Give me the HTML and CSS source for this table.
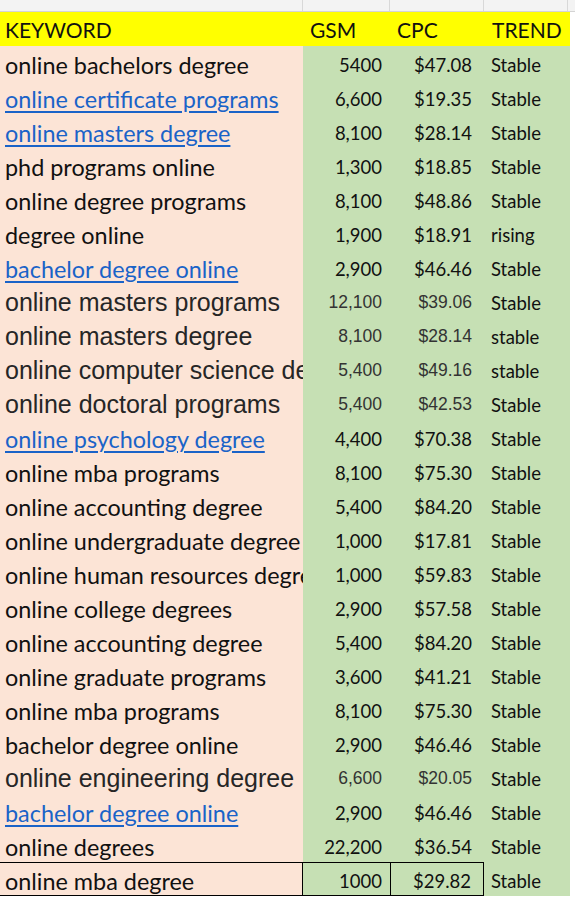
FILE: index.html
```html
<!DOCTYPE html>
<html>
<head>
<meta charset="utf-8">
<link rel="stylesheet" href="styles.css">
</head>
<body>
<div class="topstrip">
  <div class="tcell c1"></div><div class="tcell c2"></div><div class="tcell c3"></div><div class="tcell c4"></div><div class="tcell c5"></div>
</div>
<div class="sheet">
  <div class="row head">
    <div class="cell kw">KEYWORD</div><div class="cell h">GSM</div><div class="cell h">CPC</div><div class="cell h hr">TREND</div>
  </div>
  <div class="row"><div class="cell kw">online bachelors degree</div><div class="cell num">5400</div><div class="cell cpc">$47.08</div><div class="cell tr">Stable</div></div>
  <div class="row"><div class="cell kw"><span class="link">online certificate programs</span></div><div class="cell num">6,600</div><div class="cell cpc">$19.35</div><div class="cell tr">Stable</div></div>
  <div class="row"><div class="cell kw"><span class="link">online masters degree</span></div><div class="cell num">8,100</div><div class="cell cpc">$28.14</div><div class="cell tr">Stable</div></div>
  <div class="row"><div class="cell kw">phd programs online</div><div class="cell num">1,300</div><div class="cell cpc">$18.85</div><div class="cell tr">Stable</div></div>
  <div class="row"><div class="cell kw">online degree programs</div><div class="cell num">8,100</div><div class="cell cpc">$48.86</div><div class="cell tr">Stable</div></div>
  <div class="row"><div class="cell kw">degree online</div><div class="cell num">1,900</div><div class="cell cpc">$18.91</div><div class="cell tr">rising</div></div>
  <div class="row"><div class="cell kw"><span class="link">bachelor degree online</span></div><div class="cell num">2,900</div><div class="cell cpc">$46.46</div><div class="cell tr">Stable</div></div>
  <div class="row"><div class="cell kw arial">online masters programs</div><div class="cell num arialn">12,100</div><div class="cell cpc arialn">$39.06</div><div class="cell tr">Stable</div></div>
  <div class="row"><div class="cell kw arial">online masters degree</div><div class="cell num arialn">8,100</div><div class="cell cpc arialn">$28.14</div><div class="cell tr">stable</div></div>
  <div class="row"><div class="cell kw arial">online computer science degree</div><div class="cell num arialn">5,400</div><div class="cell cpc arialn">$49.16</div><div class="cell tr">stable</div></div>
  <div class="row"><div class="cell kw arial">online doctoral programs</div><div class="cell num arialn">5,400</div><div class="cell cpc arialn">$42.53</div><div class="cell tr">Stable</div></div>
  <div class="row"><div class="cell kw"><span class="link">online psychology degree</span></div><div class="cell num">4,400</div><div class="cell cpc">$70.38</div><div class="cell tr">Stable</div></div>
  <div class="row"><div class="cell kw">online mba programs</div><div class="cell num">8,100</div><div class="cell cpc">$75.30</div><div class="cell tr">Stable</div></div>
  <div class="row"><div class="cell kw">online accounting degree</div><div class="cell num">5,400</div><div class="cell cpc">$84.20</div><div class="cell tr">Stable</div></div>
  <div class="row"><div class="cell kw">online undergraduate degree</div><div class="cell num">1,000</div><div class="cell cpc">$17.81</div><div class="cell tr">Stable</div></div>
  <div class="row"><div class="cell kw">online human resources degree</div><div class="cell num">1,000</div><div class="cell cpc">$59.83</div><div class="cell tr">Stable</div></div>
  <div class="row"><div class="cell kw">online college degrees</div><div class="cell num">2,900</div><div class="cell cpc">$57.58</div><div class="cell tr">Stable</div></div>
  <div class="row"><div class="cell kw">online accounting degree</div><div class="cell num">5,400</div><div class="cell cpc">$84.20</div><div class="cell tr">Stable</div></div>
  <div class="row"><div class="cell kw">online graduate programs</div><div class="cell num">3,600</div><div class="cell cpc">$41.21</div><div class="cell tr">Stable</div></div>
  <div class="row"><div class="cell kw">online mba programs</div><div class="cell num">8,100</div><div class="cell cpc">$75.30</div><div class="cell tr">Stable</div></div>
  <div class="row"><div class="cell kw">bachelor degree online</div><div class="cell num">2,900</div><div class="cell cpc">$46.46</div><div class="cell tr">Stable</div></div>
  <div class="row"><div class="cell kw arial">online engineering degree</div><div class="cell num arialn">6,600</div><div class="cell cpc arialn">$20.05</div><div class="cell tr">Stable</div></div>
  <div class="row"><div class="cell kw"><span class="link">bachelor degree online</span></div><div class="cell num">2,900</div><div class="cell cpc">$46.46</div><div class="cell tr">Stable</div></div>
  <div class="row"><div class="cell kw">online degrees</div><div class="cell num">22,200</div><div class="cell cpc">$36.54</div><div class="cell tr">Stable</div></div>
  <div class="row last"><div class="cell kw">online mba degree</div><div class="cell num">1000</div><div class="cell cpc">$29.82</div><div class="cell tr">Stable</div></div>
</div>
</body>
</html>
```

FILE: styles.css
```css
html, body {
  margin: 0;
  padding: 0;
  background: #ffffff;
}
body {
  width: 575px;
  overflow: hidden;
  font-family: Lato, "Open Sans", sans-serif;
  color: #111;
}
.topstrip {
  display: grid;
  grid-template-columns: 303px 87px 94px 84px 7px;
  height: 11px;
  background: #f3f3f3;
  border-bottom: 1px solid #d4d4d4;
}
.tcell {
  border-right: 1px solid #d8d8d8;
}
.tcell.c5 { border-right: none; }
.sheet {
  display: flex;
  flex-direction: column;
  width: 570px;
}
.row {
  display: grid;
  grid-template-columns: 303px 87px 94px 86px;
  height: 34px;
}
.cell {
  display: flex;
  align-items: center;
  font-size: 18.5px;
  white-space: nowrap;
  overflow: hidden;
  box-sizing: border-box;
  padding-top: 3px;
}
.kw {
  background: #fce4d6;
  padding-left: 5px;
  font-size: 23.4px;
}
.num, .cpc, .tr {
  background: #c6e0b4;
}
.num {
  justify-content: flex-end;
  padding-right: 8px;
}
.cpc {
  justify-content: flex-end;
  padding-right: 12px;
}
.tr {
  padding-left: 7px;
}
.head .cell {
  background: #ffff00;
  font-size: 21px;
  padding-top: 0;
}
.head .h {
  padding-left: 7px;
}
.head .hr {
  padding-left: 8px;
}
.arial {
  font-family: "Liberation Sans", Arial, sans-serif;
  font-size: 25px;
  color: #262626;
}
.arialn {
  font-family: "Liberation Sans", Arial, sans-serif;
  font-size: 17.5px;
  color: #333;
}
.link {
  color: #1a63c8;
  text-decoration: underline;
  text-underline-offset: 3px;
  text-decoration-thickness: 1.5px;
}
.last .kw, .last .num, .last .cpc {
  border-top: 1px solid #000;
  border-bottom: 1px solid #000;
}
.last .kw { border-right: 1px solid #000; }
.last .cpc { border-left: 1px solid #000; border-right: 1px solid #000; }
```
